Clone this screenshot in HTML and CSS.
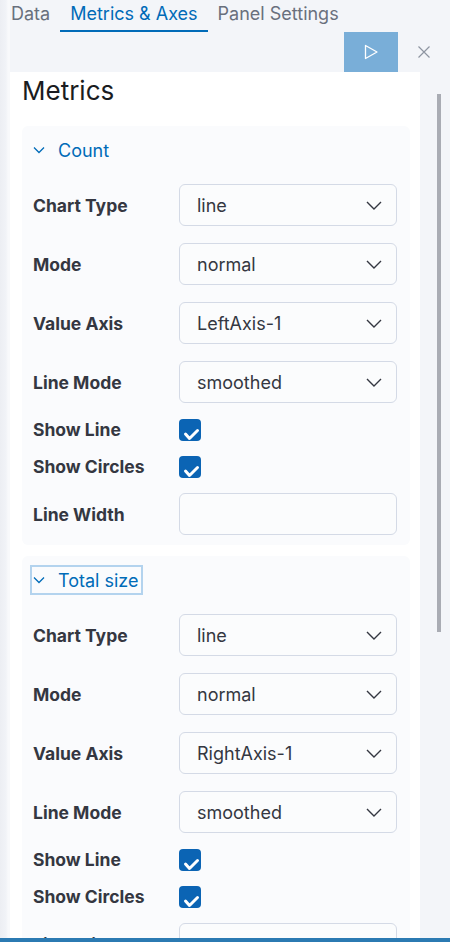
FILE: index.html
```html
<!DOCTYPE html>
<html lang="en">
<head>
<meta charset="utf-8">
<title>Metrics &amp; Axes</title>
<link rel="stylesheet" href="styles.css">
</head>
<body>
<div class="app">
  <nav class="tabs">
    <div class="tab">Data</div>
    <div class="tab active">Metrics &amp; Axes</div>
    <div class="tab">Panel Settings</div>
  </nav>
  <div class="toolbar">
    <div class="apply">
      <svg width="16" height="16" viewBox="0 0 16 16"><path d="M2.5 1.5 L14 8 L2.5 14.5 Z" fill="none" stroke="#fff" stroke-width="1.3" stroke-linejoin="round"/></svg>
    </div>
    <div class="close">
      <svg width="14" height="14" viewBox="0 0 14 14"><path d="M1.5 1.5 L12.5 12.5 M12.5 1.5 L1.5 12.5" stroke="#8e95a2" stroke-width="1.2" fill="none"/></svg>
    </div>
  </div>
  <div class="sheet">
    <h2 class="title">Metrics</h2>

    <section class="card">
      <div class="card-head">
        <svg class="chev-small" width="12" height="8" viewBox="0 0 12 8"><path d="M1 1.5 L6 6.5 L11 1.5" fill="none" stroke="#006bb8" stroke-width="1.3"/></svg>
        <span>Count</span>
      </div>
      <div class="row first"><div class="label">Chart Type</div><div class="select"><span>line</span><svg width="16" height="9" viewBox="0 0 16 9"><path d="M1 1 L8 8 L15 1" fill="none" stroke="#343741" stroke-width="1.4"/></svg></div></div>
      <div class="row"><div class="label">Mode</div><div class="select"><span>normal</span><svg width="16" height="9" viewBox="0 0 16 9"><path d="M1 1 L8 8 L15 1" fill="none" stroke="#343741" stroke-width="1.4"/></svg></div></div>
      <div class="row"><div class="label">Value Axis</div><div class="select"><span>LeftAxis-1</span><svg width="16" height="9" viewBox="0 0 16 9"><path d="M1 1 L8 8 L15 1" fill="none" stroke="#343741" stroke-width="1.4"/></svg></div></div>
      <div class="row"><div class="label">Line Mode</div><div class="select"><span>smoothed</span><svg width="16" height="9" viewBox="0 0 16 9"><path d="M1 1 L8 8 L15 1" fill="none" stroke="#343741" stroke-width="1.4"/></svg></div></div>
      <div class="row check"><div class="label">Show Line</div><svg class="cb" width="22" height="22" viewBox="0 0 22 22"><rect x="0" y="0" width="22" height="22" rx="4" fill="#0b64b4"/><path d="M6.5 15 L10.5 19.5 L18.5 11.5" fill="none" stroke="#fff" stroke-width="3" stroke-linecap="round" stroke-linejoin="round"/></svg></div>
      <div class="row check"><div class="label">Show Circles</div><svg class="cb" width="22" height="22" viewBox="0 0 22 22"><rect x="0" y="0" width="22" height="22" rx="4" fill="#0b64b4"/><path d="M6.5 15 L10.5 19.5 L18.5 11.5" fill="none" stroke="#fff" stroke-width="3" stroke-linecap="round" stroke-linejoin="round"/></svg></div>
      <div class="row field"><div class="label">Line Width</div><div class="input"></div></div>
    </section>

    <section class="card">
      <div class="card-head focused">
        <svg class="chev-small" width="12" height="8" viewBox="0 0 12 8"><path d="M1 1.5 L6 6.5 L11 1.5" fill="none" stroke="#006bb8" stroke-width="1.3"/></svg>
        <span>Total size</span>
      </div>
      <div class="row first"><div class="label">Chart Type</div><div class="select"><span>line</span><svg width="16" height="9" viewBox="0 0 16 9"><path d="M1 1 L8 8 L15 1" fill="none" stroke="#343741" stroke-width="1.4"/></svg></div></div>
      <div class="row"><div class="label">Mode</div><div class="select"><span>normal</span><svg width="16" height="9" viewBox="0 0 16 9"><path d="M1 1 L8 8 L15 1" fill="none" stroke="#343741" stroke-width="1.4"/></svg></div></div>
      <div class="row"><div class="label">Value Axis</div><div class="select"><span>RightAxis-1</span><svg width="16" height="9" viewBox="0 0 16 9"><path d="M1 1 L8 8 L15 1" fill="none" stroke="#343741" stroke-width="1.4"/></svg></div></div>
      <div class="row"><div class="label">Line Mode</div><div class="select"><span>smoothed</span><svg width="16" height="9" viewBox="0 0 16 9"><path d="M1 1 L8 8 L15 1" fill="none" stroke="#343741" stroke-width="1.4"/></svg></div></div>
      <div class="row check"><div class="label">Show Line</div><svg class="cb" width="22" height="22" viewBox="0 0 22 22"><rect x="0" y="0" width="22" height="22" rx="4" fill="#0b64b4"/><path d="M6.5 15 L10.5 19.5 L18.5 11.5" fill="none" stroke="#fff" stroke-width="3" stroke-linecap="round" stroke-linejoin="round"/></svg></div>
      <div class="row check"><div class="label">Show Circles</div><svg class="cb" width="22" height="22" viewBox="0 0 22 22"><rect x="0" y="0" width="22" height="22" rx="4" fill="#0b64b4"/><path d="M6.5 15 L10.5 19.5 L18.5 11.5" fill="none" stroke="#fff" stroke-width="3" stroke-linecap="round" stroke-linejoin="round"/></svg></div>
      <div class="row field"><div class="label">Line Width</div><div class="input"></div></div>
    </section>
  </div>
  <div class="scrollbar"></div>
  <div class="bottom-bar"></div>
</div>
</body>
</html>
```

FILE: styles.css
```css
* { box-sizing: border-box; }
html, body {
  margin: 0;
  padding: 0;
  height: 100%;
  overflow: hidden;
}
body {
  background: linear-gradient(to right, #eceef3 0, #f1f3f7 6px, #f8f9fb 8px, #f8f9fb 10px, transparent 10px), #f3f5f9;
  font-family: Inter, "Noto Sans", sans-serif;
  color: #343741;
}
.app {
  position: relative;
  height: 942px;
}
.tabs {
  display: flex;
  height: 32px;
}
.tab {
  padding: 3px 10px 5px;
  line-height: 22px;
  font-size: 18px;
  color: #69707d;
  border-bottom: 2px solid transparent;
}
.tab:first-child {
  padding-left: 11px;
}
.tab.active {
  color: #006bb8;
  border-bottom-color: #006bb8;
}
.toolbar {
  display: flex;
  justify-content: flex-end;
  height: 40px;
}
.apply {
  width: 54px;
  height: 40px;
  background: #79aed8;
  display: flex;
  align-items: center;
  justify-content: center;
}
.close {
  width: 52px;
  height: 40px;
  display: flex;
  align-items: center;
  justify-content: center;
}
.sheet {
  margin-left: 10px;
  width: 410px;
  background: #fff;
  padding: 3px 10px 0 12px;
  min-height: 900px;
}
.title {
  margin: 0 0 19px;
  font-size: 26px;
  line-height: 32px;
  font-weight: 400;
  color: #1a1c21;
}
.card {
  background: #fafbfd;
  border-radius: 6px;
  padding: 9px 13px 10px 11px;
  margin-bottom: 11px;
}
.card-head {
  display: inline-flex;
  align-items: center;
  height: 30px;
  margin-left: -3px;
  padding: 0 2px 0 1px;
  border: 2px solid transparent;
  color: #006bb8;
  font-size: 18px;
}
.card-head.focused {
  border-color: #b3d3ee;
}
.chev-small {
  margin-right: 13px;
}
.row {
  display: flex;
  align-items: center;
  height: 42px;
  margin-top: 17px;
}
.row.first {
  margin-top: 19px;
}
.row.check {
  height: 21px;
  margin-top: 16px;
}
.row.field {
  margin-top: 16px;
}
.label {
  width: 146px;
  flex: none;
  font-weight: 700;
  font-size: 17.5px;
  color: #343741;
}
.select, .input {
  flex: 1;
  height: 42px;
  border: 1.5px solid #d4dae6;
  border-radius: 6px;
  background: #fbfcfd;
}
.select {
  display: flex;
  align-items: center;
  justify-content: space-between;
  padding: 0 14px 0 17px;
  font-size: 18px;
  color: #343741;
}
.cb {
  display: block;
}
.scrollbar {
  position: absolute;
  left: 437px;
  top: 94px;
  width: 4px;
  height: 538px;
  background: #a9acb4;
}
.bottom-bar {
  position: absolute;
  left: 0;
  right: 0;
  bottom: 0;
  height: 4px;
  background: #2b7ab2;
}
```
